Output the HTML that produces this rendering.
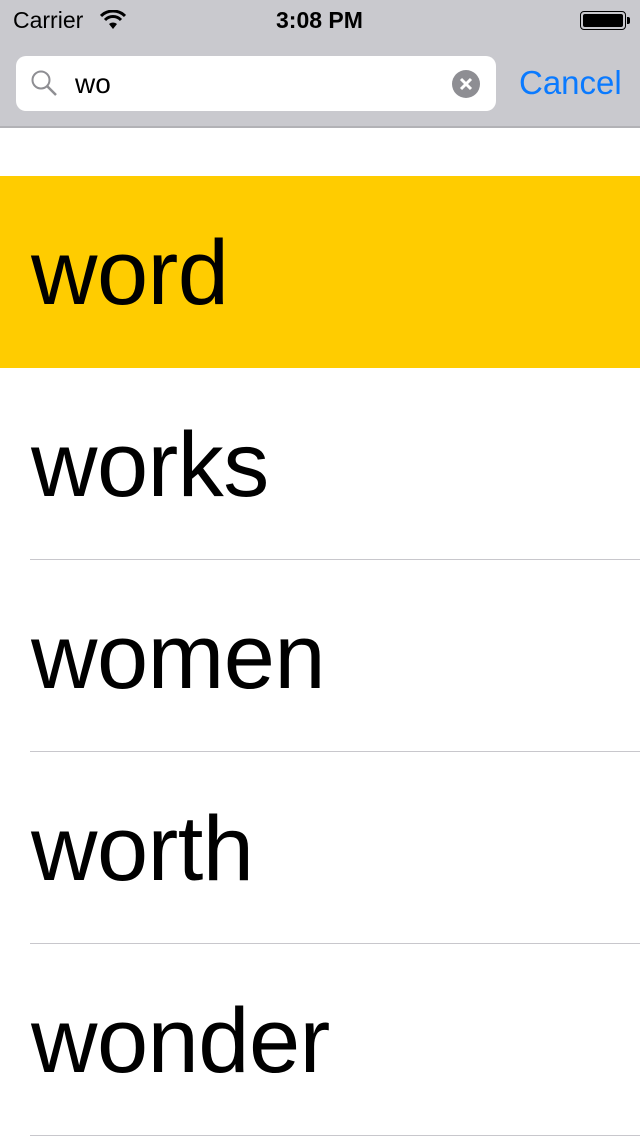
<!DOCTYPE html>
<html><head><meta charset="utf-8"><style>
*{margin:0;padding:0;box-sizing:border-box}
body{width:640px;height:1136px;background:#fff;font-family:"Liberation Sans",sans-serif;position:relative;overflow:hidden}
.hdr{position:absolute;left:0;top:0;width:640px;height:128px;background:#c9c9ce;border-bottom:2px solid #b2b2b6}
.st{position:absolute;top:7px;font-size:23px;color:#000}
.sb{position:absolute;left:16px;top:56px;width:480px;height:55px;background:#fff;border-radius:10px}
.cancel{position:absolute;left:519px;top:64px;font-size:33px;color:#0a7aff}
.row{position:absolute;left:0;width:640px;height:192px}
.row span{position:absolute;left:31px;top:42px;font-size:92px;letter-spacing:-0.5px;color:#000;line-height:1.2}
.sep{position:absolute;left:30px;right:0;height:1px;background:#c8c7cc}
</style></head><body>
<div class="hdr">
<div class="st" style="left:13px">Carrier</div>
<svg style="position:absolute;left:100px;top:10px" width="26" height="20" viewBox="0 0 26 20"><path d="M13 19 L9 14 A6 6 0 0 1 17 14Z" fill="#000"/><path d="M5 10 A11 11 0 0 1 21 10" stroke="#000" stroke-width="3" fill="none"/><path d="M1 6 A17 17 0 0 1 25 6" stroke="#000" stroke-width="3" fill="none"/></svg>
<div class="st" style="left:276px;font-weight:bold">3:08 PM</div>
<div style="position:absolute;left:580px;top:11px;width:46px;height:19px;border:1.5px solid #000;border-radius:4px;padding:2px"><div style="width:100%;height:100%;background:#000;border-radius:2px"></div></div>
<div style="position:absolute;left:627px;top:17px;width:3px;height:7px;background:#000;border-radius:0 2px 2px 0"></div>
<div class="sb">
<svg style="position:absolute;left:14px;top:13px" width="30" height="30" viewBox="0 0 30 30"><circle cx="11" cy="11" r="8.5" stroke="#8e8e93" stroke-width="2" fill="none"/><path d="M17 17 L26 26" stroke="#8e8e93" stroke-width="2.5"/></svg>
<div style="position:absolute;left:59px;top:12px;font-size:28px;color:#000">wo</div>
<svg style="position:absolute;left:436px;top:14px" width="28" height="28" viewBox="0 0 28 28"><circle cx="14" cy="14" r="14" fill="#8e8e93"/><path d="M9 9 L19 19 M19 9 L9 19" stroke="#fff" stroke-width="3"/></svg>
</div>
<div class="cancel">Cancel</div>
</div>
<div class="row" style="top:176px;background:#ffcc00"><span>word</span></div>
<div class="row" style="top:368px"><span>works</span></div>
<div class="sep" style="top:559px"></div>
<div class="row" style="top:560px"><span>women</span></div>
<div class="sep" style="top:751px"></div>
<div class="row" style="top:752px"><span>worth</span></div>
<div class="sep" style="top:943px"></div>
<div class="row" style="top:944px"><span>wonder</span></div>
<div class="sep" style="top:1135px"></div>
</body></html>
